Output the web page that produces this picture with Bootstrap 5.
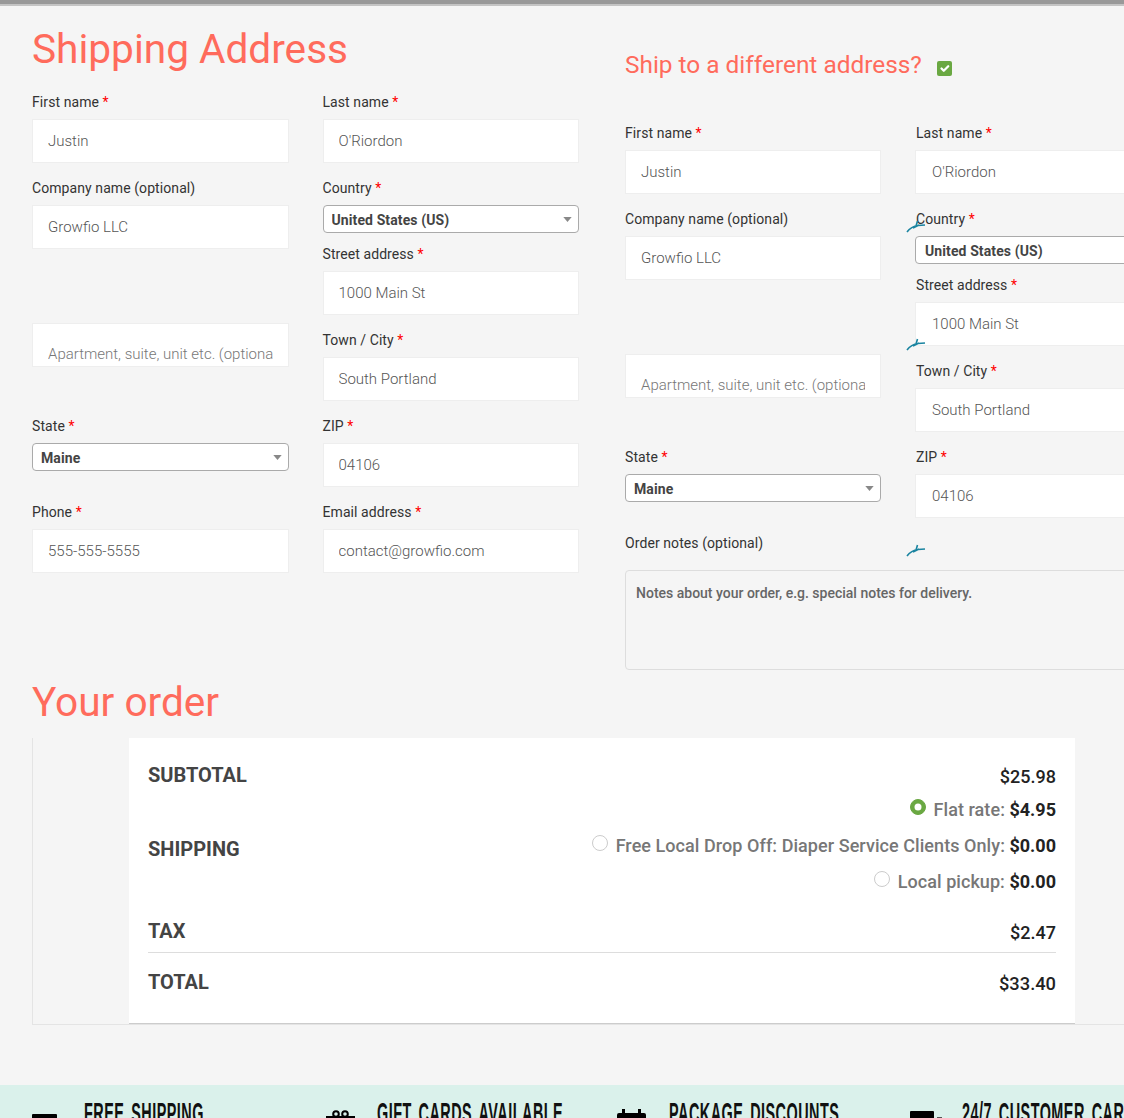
<!DOCTYPE html>
<html lang="en">
<head>
    <meta charset="UTF-8">
    <meta name="viewport" content="width=device-width, initial-scale=1.0">
    <title>Checkout</title>
    <link href="https://cdn.jsdelivr.net/npm/bootstrap@5.3.3/dist/css/bootstrap.min.css" rel="stylesheet">
    <script src="https://cdn.jsdelivr.net/npm/bootstrap@5.3.3/dist/js/bootstrap.bundle.min.js"></script>
    <style>
        html, body { height: 1118px; overflow: hidden; }
        body {
            background: #f5f5f5;
            font-family: Roboto, sans-serif;
            color: #333;
        }

        .top-strip { height: 6px; background: #999; border-bottom: 2px solid #c4c4c4; }

        /* Form columns */
        .form-area { padding: 0 0 0 32px; gap: 46px; width: 1172px; }
        .form-side { flex: 0 0 547px; }
        .form-cols { gap: 34px; }
        .form-col { flex: 0 0 256.5px; min-width: 0; }
        .form-cols-alt .form-col:first-child { flex-basis: 256px; }
        .form-cols-alt .form-col:last-child .fld-label { margin-left: 1px; }
        .form-cols-alt .form-col:last-child .form-control { padding-left: 16px; }
        .form-cols-alt .form-col:last-child .form-select { padding-left: 9px; }

        .title-main {
            font-family: Roboto, sans-serif;
            font-weight: 400;
            font-size: 40.6px;
            line-height: 44px;
            color: #ff6b5c;
            margin: 21px 0 21px 0;
        }
        .title-side {
            font-weight: 400;
            font-size: 24.4px;
            line-height: 32px;
            color: #ff6b5c;
            margin: 43px 0 42px 0;
            gap: 15px;
        }

        .fld { margin-bottom: 15px; }
        .fld-label {
            display: block;
            font-size: 14px;
            letter-spacing: .08px;
            line-height: 20px;
            margin-bottom: 7px;
            color: #333;
        }
        .req { color: #f00; }
        .fld .form-control {
            height: 44px;
            border: 1px solid #eee;
            border-radius: 0;
            padding: 0 15px;
            background: #fff;
            font-family: Roboto, sans-serif;
            font-weight: 300;
            font-size: 15px;
            color: #555;
        }
        .fld .form-control.apt { padding-top: 18px; }
        .fld .form-control::placeholder { color: #777; opacity: 1; }
        .fld-select { margin-bottom: 11px; }
        .fld .form-select {
            height: 28px;
            padding: 2px 24px 0 8px;
            border: 1px solid #aaa;
            border-radius: 4px;
            font-size: 14px;
            letter-spacing: .1px;
            font-weight: 700;
            color: #444;
            background-color: #fff;
            background-size: 9px 5px;
            background-position: right 6px center;
            background-image: url("data:image/svg+xml,%3Csvg xmlns='http://www.w3.org/2000/svg' viewBox='0 0 10 6'%3E%3Cpath fill='%23888' d='M0 0h10L5 6z'/%3E%3C/svg%3E");
        }
        .apt-gap { margin-top: 74px; margin-bottom: 49px; }
        .state-fld { margin-bottom: 31px; }
        .notes-label { margin-bottom: 17px; }
        .notes-box {
            height: 100px;
            border: 1px solid #ddd;
            border-radius: 4px;
            padding: 12px 10px;
            background: #f5f5f5;
            font-size: 14px;
            font-weight: 500;
            resize: none;
        }
        .notes-box::placeholder { color: #666; opacity: 1; }

        .ship-check.form-check-input {
            width: 15px;
            height: 15px;
            margin: 6px 0 0 0;
            border-radius: 2px;
            border: 0;
            background-color: #6aa842;
        }

        /* Order */
        .order-title {
            font-weight: 400;
            font-size: 40.6px;
            line-height: 44px;
            color: #ff6b5c;
            margin: 10px 0 14px 32px;
        }
        .order-wrap {
            margin-left: 32px;
            height: 287px;
            padding-left: 96px;
            padding-right: 49px;
            border-left: 1px solid #e4e4e4;
            border-bottom: 1px solid #e4e4e4;
        }
        .order-card {
            height: 286px;
            padding: 17px 19px 0 19px;
            background: #fff;
            border-bottom: 1px solid #ccc;
        }
        .order-name { font-size: 20px; line-height: 40px; font-weight: 700; color: #444; }
        .order-val { font-size: 18px; line-height: 36px; font-weight: 500; color: #222; padding-top: 4px; }
        .ship-block { height: 108px; margin-top: -4px; }
        .ship-name { padding-top: 38px; }
        .ship-line {
            height: 36px;
            font-size: 18px;
            font-weight: 500;
            letter-spacing: .06px;
            color: #777;
            gap: 8px;
        }
        .ship-line b { font-weight: 700; color: #222; letter-spacing: 0; }
        .ship-radio.form-check-input {
            width: 16px;
            height: 16px;
            margin: -5px 0 0 0;
            border: 1px solid #ccc;
            background-color: #fff;
        }
        .ship-radio.form-check-input:checked {
            background-color: #6aa842;
            border-color: #6aa842;
        }
        .tax-row { margin-top: 12px; padding-bottom: 1px; border-bottom: 1px solid #ddd; }
        .total-row { margin-top: 9px; }
        .total-row .order-val { font-size: 18.3px; }

        /* Perks band */
        .perks {
            margin-top: 60px;
            height: 60px;
            background: #daf1eb;
            padding: 14px 0 0 32px;
            width: 1300px;
        }
        .perk { flex: 0 0 292.5px; min-width: 0; }
        .perk svg { flex: none; margin-top: 6px; }
        .perk-text {
            font-family: "Liberation Sans", sans-serif;
            font-weight: 700;
            font-size: 30px;
            line-height: 28px;
            letter-spacing: 1px;
            word-spacing: 5px;
            color: #111;
            white-space: nowrap;
            transform: scaleX(.48);
            transform-origin: left top;
        }

        /* stray cursor marks from the capture */
        .mark-bird { position: absolute; left: 906px; width: 20px; height: 13px; }
    </style>
</head>
<body>
    <div class="top-strip"></div>

    <div class="form-area d-flex">
        <div class="form-side">
            <h1 class="title-main">Shipping Address</h1>
            <div class="form-cols d-flex">
                <div class="form-col">
                    <div class="fld"><label class="fld-label">First name <span class="req">*</span></label><input class="form-control" value="Justin"></div>
                    <div class="fld"><label class="fld-label">Company name (optional)</label><input class="form-control" value="Growfio LLC"></div>
                    <div class="fld apt-gap"><input class="form-control apt" placeholder="Apartment, suite, unit etc. (optional)"></div>
                    <div class="fld state-fld"><label class="fld-label">State <span class="req">*</span></label><select class="form-select"><option>Maine</option></select></div>
                    <div class="fld"><label class="fld-label">Phone <span class="req">*</span></label><input class="form-control" value="555-555-5555"></div>
                </div>
                <div class="form-col">
                    <div class="fld"><label class="fld-label">Last name <span class="req">*</span></label><input class="form-control" value="O'Riordon"></div>
                    <div class="fld fld-select"><label class="fld-label">Country <span class="req">*</span></label><select class="form-select"><option>United States (US)</option></select></div>
                    <div class="fld"><label class="fld-label">Street address <span class="req">*</span></label><input class="form-control" value="1000 Main St"></div>
                    <div class="fld"><label class="fld-label">Town / City <span class="req">*</span></label><input class="form-control" value="South Portland"></div>
                    <div class="fld"><label class="fld-label">ZIP <span class="req">*</span></label><input class="form-control" value="04106"></div>
                    <div class="fld"><label class="fld-label">Email address <span class="req">*</span></label><input class="form-control" value="contact@growfio.com"></div>
                </div>
            </div>
        </div>

        <div class="form-side">
            <h3 class="title-side d-flex align-items-center"><span>Ship to a different address?</span><input class="form-check-input ship-check" type="checkbox" checked></h3>
            <div class="form-cols form-cols-alt d-flex">
                <div class="form-col">
                    <div class="fld"><label class="fld-label">First name <span class="req">*</span></label><input class="form-control" value="Justin"></div>
                    <div class="fld"><label class="fld-label">Company name (optional)</label><input class="form-control" value="Growfio LLC"></div>
                    <div class="fld apt-gap"><input class="form-control apt" placeholder="Apartment, suite, unit etc. (optional)"></div>
                    <div class="fld"><label class="fld-label">State <span class="req">*</span></label><select class="form-select"><option>Maine</option></select></div>
                </div>
                <div class="form-col">
                    <div class="fld"><label class="fld-label">Last name <span class="req">*</span></label><input class="form-control" value="O'Riordon"></div>
                    <div class="fld fld-select"><label class="fld-label">Country <span class="req">*</span></label><select class="form-select"><option>United States (US)</option></select></div>
                    <div class="fld"><label class="fld-label">Street address <span class="req">*</span></label><input class="form-control" value="1000 Main St"></div>
                    <div class="fld"><label class="fld-label">Town / City <span class="req">*</span></label><input class="form-control" value="South Portland"></div>
                    <div class="fld"><label class="fld-label">ZIP <span class="req">*</span></label><input class="form-control" value="04106"></div>
                </div>
            </div>
            <label class="fld-label notes-label">Order notes (optional)</label>
            <textarea class="form-control notes-box" placeholder="Notes about your order, e.g. special notes for delivery."></textarea>
        </div>
    </div>

    <h2 class="order-title">Your order</h2>
    <div class="order-wrap">
        <div class="order-card">
            <div class="d-flex justify-content-between">
                <div class="order-name">SUBTOTAL</div>
                <div class="order-val">$25.98</div>
            </div>
            <div class="ship-block d-flex justify-content-between">
                <div class="order-name ship-name">SHIPPING</div>
                <div>
                    <div class="ship-line d-flex align-items-center justify-content-end"><input class="form-check-input ship-radio" type="radio" name="ship" checked><span>Flat rate: <b>$4.95</b></span></div>
                    <div class="ship-line d-flex align-items-center justify-content-end"><input class="form-check-input ship-radio" type="radio" name="ship"><span>Free Local Drop Off: Diaper Service Clients Only: <b>$0.00</b></span></div>
                    <div class="ship-line d-flex align-items-center justify-content-end"><input class="form-check-input ship-radio" type="radio" name="ship"><span>Local pickup: <b>$0.00</b></span></div>
                </div>
            </div>
            <div class="tax-row d-flex justify-content-between">
                <div class="order-name">TAX</div>
                <div class="order-val">$2.47</div>
            </div>
            <div class="total-row d-flex justify-content-between">
                <div class="order-name">TOTAL</div>
                <div class="order-val">$33.40</div>
            </div>
        </div>
    </div>

    <div class="perks d-flex">
        <div class="perk d-flex">
            <svg width="52" height="20" viewBox="0 0 52 20"><rect y="9" width="25" height="11" rx="1" fill="#000"/></svg>
            <div class="perk-text">FREE SHIPPING</div>
        </div>
        <div class="perk d-flex">
            <svg width="52" height="20" viewBox="0 0 52 20"><path fill="#000" d="M1 11h29v4H1z"/><circle cx="11" cy="9" r="2.8" fill="none" stroke="#000" stroke-width="2"/><circle cx="20" cy="9" r="2.8" fill="none" stroke="#000" stroke-width="2"/></svg>
            <div class="perk-text">GIFT CARDS AVAILABLE</div>
        </div>
        <div class="perk d-flex">
            <svg width="52" height="20" viewBox="0 0 52 20"><path fill="#000" d="M5 4h3v4h13V4h3v4h3a2 2 0 0 1 2 2v10H0V10a2 2 0 0 1 2-2h3z"/></svg>
            <div class="perk-text">PACKAGE DISCOUNTS</div>
        </div>
        <div class="perk d-flex">
            <svg width="52" height="20" viewBox="0 0 52 20"><rect y="6" width="24" height="14" rx="1" fill="#000"/><rect x="27" y="12" width="5" height="8" fill="#555"/></svg>
            <div class="perk-text">24/7 CUSTOMER CARE</div>
        </div>
    </div>

    <svg class="mark-bird" style="top:220px" viewBox="0 0 20 13"><path fill="none" stroke="#1a84a0" stroke-width="1.6" d="M1 12C4 8 8 6 12 5.5L19 5M7 8l6-3M10 6 11.500 1"/></svg>
    <svg class="mark-bird" style="top:338px" viewBox="0 0 20 13"><path fill="none" stroke="#1a84a0" stroke-width="1.6" d="M1 12C4 8 8 6 12 5.5L19 5M7 8l6-3M10 6 11.500 1"/></svg>
    <svg class="mark-bird" style="top:544px" viewBox="0 0 20 13"><path fill="none" stroke="#1a84a0" stroke-width="1.6" d="M1 12C4 8 8 6 12 5.5L19 5M7 8l6-3M10 6 11.500 1"/></svg>
</body>
</html>
